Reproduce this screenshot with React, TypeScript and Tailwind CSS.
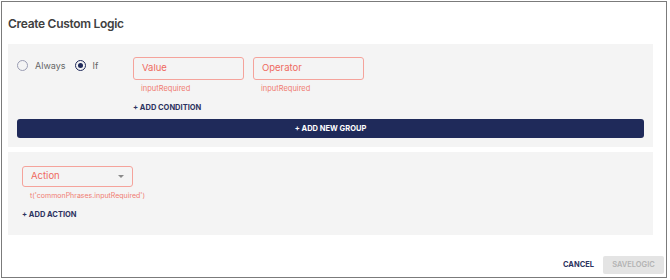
import React from "react";

function Radio({ checked, label }: { checked?: boolean; label: string }) {
  return (
    <div className="flex items-center">
      {checked ? (
        <div className="w-[11px] h-[11px] rounded-full border-[1.5px] border-[#1f2a5a] flex items-center justify-center">
          <div className="w-[5px] h-[5px] rounded-full bg-[#1f2a5a]" />
        </div>
      ) : (
        <div className="w-[11px] h-[11px] rounded-full border border-[#9a9db3]" />
      )}
      <span className="ml-[7px] text-[9px] leading-[11px] text-[#666666]">{label}</span>
    </div>
  );
}

export default function App() {
  return (
    <div
      className="w-[670px] h-[280px] bg-white overflow-hidden pt-[1px] pl-[1px]"
      style={{ fontFamily: "Inter, 'Noto Sans', sans-serif" }}
    >
      <div className="w-[666px] h-[277px] border border-[#7b7b7b] flex flex-col">
        <div className="h-[42px] pl-[6px] pt-[14px] text-[12px] leading-[15px] font-semibold tracking-[-0.3px] text-[#404040]">
          Create Custom Logic
        </div>

        <div className="ml-[6px] w-[645px] h-[103px] bg-[#f4f4f4] pt-[13px] px-[9px] flex flex-col">
          <div className="flex">
            <div className="w-[116px] h-[17px] flex items-center gap-[9px]">
              <Radio label="Always" />
              <Radio checked label="If" />
            </div>
            <div className="flex flex-col">
              <div className="flex gap-[9px]">
                <div className="w-[111px] h-[23px] border border-[#f5a39b] rounded-[3px] pl-[8px] flex items-center text-[9.5px] text-[#ef6a5f]">
                  Value
                </div>
                <div className="w-[111px] h-[23px] border border-[#f5a39b] rounded-[3px] pl-[8px] flex items-center text-[9.5px] text-[#ef6a5f]">
                  Operator
                </div>
              </div>
              <div className="flex gap-[9px] mt-[4px]">
                <div className="w-[111px] pl-[8px] text-[7.5px] leading-[9px] text-[#f07c72]">inputRequired</div>
                <div className="w-[111px] pl-[8px] text-[7.5px] leading-[9px] text-[#f07c72]">inputRequired</div>
              </div>
              <div className="mt-[10px] text-[7.5px] leading-[10px] font-bold text-[#2c3360]">+ ADD CONDITION</div>
            </div>
          </div>
          <div className="mt-[6px] h-[19px] w-full bg-[#1f2a5a] rounded-[3px] flex items-center justify-center text-white text-[7.5px] font-bold">
            + ADD NEW GROUP
          </div>
        </div>

        <div className="mt-[5px] ml-[6px] w-[645px] h-[83px] bg-[#f4f4f4] pt-[14px] pl-[14px] flex flex-col">
          <div className="w-[111px] h-[21px] border border-[#f5a39b] rounded-[3px] pl-[8px] pr-[8px] flex items-center justify-between text-[9.5px] text-[#ef6a5f]">
            <span>Action</span>
            <svg width="6" height="3" viewBox="0 0 6 3">
              <path d="M0 0 L6 0 L3 3 Z" fill="#8a8a8a" />
            </svg>
          </div>
          <div className="mt-[3.5px] pl-[8px] text-[7px] leading-[9px] text-[#f07c72]">t('commonPhrases.inputRequired')</div>
          <div className="mt-[10.5px] text-[7.5px] leading-[10px] font-bold text-[#2c3360]">+ ADD ACTION</div>
        </div>

        <div className="mt-[21px] flex justify-end items-center pr-[2px]">
          <span className="text-[7.5px] font-bold text-[#2c3360]">CANCEL</span>
          <div className="ml-[9px] w-[61px] h-[18px] bg-[#e4e4e4] rounded-[2px] flex items-center justify-center text-[7.5px] font-semibold text-[#b3b3b3]">
            SAVELOGIC
          </div>
        </div>
      </div>
    </div>
  );
}
